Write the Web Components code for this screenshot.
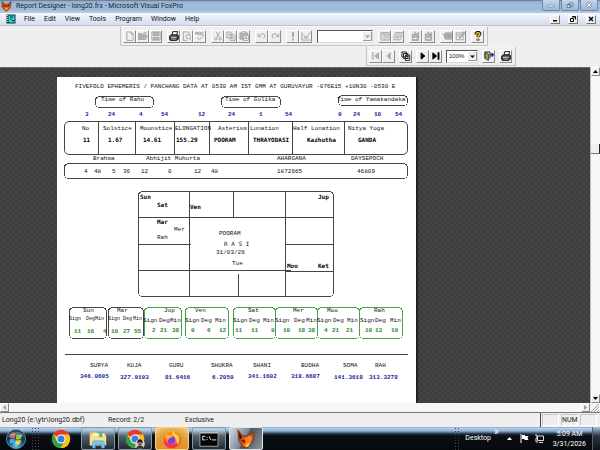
<!DOCTYPE html>
<html lang="en">
<head>
<meta charset="utf-8">
<title>Report Designer - long20.frx - Microsoft Visual FoxPro</title>
<style>
html, body { margin: 0; height: 100%; }
body { font: 7px/9px Roboto, "Open Sans", sans-serif; color: #1c1c1c; overflow: hidden; background: #eee; }
</style>
</head>
<body>
<fox-window></fox-window>

<template id="t-window">
<style>
:host { display: flex; flex-direction: column; min-height: 100vh; height: 100vh; }
.dock { flex: none; height: 42px; background: #efefef; border-top: 1px solid #c3c3c8; box-sizing: border-box; display: flex; flex-direction: column; }
.dock tool-bar.std { margin-left: 120px; --gap: 5px; }
.dock tool-bar.prev { margin-left: 366px; }
report-desk { flex: 1; min-height: 0; }
title-bar, menu-bar, status-bar, task-bar { flex: none; }
</style>
<title-bar>Report Designer - long20.frx - Microsoft Visual FoxPro</title-bar>
<menu-bar></menu-bar>
<div class="dock">
  <tool-bar class="std" label="Standard">
    <tool-group><tool-button icon="new" label="New" off></tool-button><tool-button icon="open" label="Open" off></tool-button><tool-button icon="save" label="Save" off></tool-button></tool-group>
    <tool-group><tool-button icon="print" label="Print"></tool-button><tool-button icon="preview" label="Print Preview" off></tool-button><tool-button icon="spell" label="Spelling" off></tool-button></tool-group>
    <tool-group><tool-button icon="cut" label="Cut" off></tool-button><tool-button icon="copy" label="Copy" off></tool-button><tool-button icon="paste" label="Paste" off></tool-button></tool-group>
    <tool-group><tool-button icon="undo" label="Undo" off></tool-button><tool-button icon="redo" label="Redo" off></tool-button></tool-group>
    <tool-group><tool-button icon="run" label="Run" off></tool-button><tool-button icon="modify" label="Modify Form" off></tool-button></tool-group>
    <combo-box label="Database" off style="--w:56px"></combo-box>
    <tool-group><tool-button icon="command" label="Command Window" off></tool-button><tool-button icon="view" label="Data Session Window" off></tool-button></tool-group>
    <tool-group><tool-button icon="wizard" label="Form Wizard" off></tool-button><tool-button icon="wizard" label="Report Wizard" off></tool-button></tool-group>
    <tool-group><tool-button icon="autoform" label="AutoForm" off></tool-button><tool-button icon="autoreport" label="AutoReport" off></tool-button></tool-group>
    <tool-group><tool-button icon="help" label="Help"></tool-button></tool-group>
  </tool-bar>
  <tool-bar class="prev" label="Print Preview">
    <tool-group><tool-button icon="first" label="First Page" off></tool-button><tool-button icon="back" label="Previous Page" off></tool-button></tool-group>
    <tool-group><tool-button icon="goto" label="Go to Page"></tool-button></tool-group>
    <tool-group><tool-button icon="next" label="Next Page"></tool-button><tool-button icon="last" label="Last Page"></tool-button></tool-group>
    <combo-box label="Zoom" value="100%" style="--w:32px"></combo-box>
    <tool-group><tool-button icon="door" label="Close Preview"></tool-button></tool-group>
    <tool-group><tool-button icon="print" label="Print Report"></tool-button></tool-group>
  </tool-bar>
</div>
<report-desk><report-sheet></report-sheet></report-desk>
<status-bar></status-bar>
<task-bar></task-bar>
</template>

<template id="t-title">
<style>
:host { display: flex; align-items: center; height: 13px; background: linear-gradient(#4d5a6b 0, #8fadcb 1px, #a3bfdc 5px, #9bb9d8 9px, #b8cde4 13px); }
h1 { flex: 1; margin: 0; font: inherit; white-space: nowrap; color: #15202e; }
svg { width: 11px; height: 11px; margin: 0 4px 0 1px; }
.b { display: flex; gap: 1px; padding-right: 2px; align-self: flex-start; }
button { width: 18px; height: 11px; padding: 0; border: 1px solid #6f88a6; border-top: 0; border-radius: 0 0 2px 2px; background: linear-gradient(#c4d6ea, #9db8d5); display: grid; place-items: center; }
button svg { width: 8px; height: 6px; margin: 0; }
</style>
<svg viewBox="0 0 24 24"><path d="M2 1l7 6h6l7-6-1 12-4 5-5 5-6-5-4-5z" fill="#d8470c" stroke="#5a1a04"/><path d="M8 12l4 3 5-4-1 5-4 5-4-4z" fill="#f79a2b"/><path d="M6 10l4 2M18 9l-4 3" stroke="#200" stroke-width="2"/></svg>
<h1><slot></slot></h1>
<div class="b">
<button aria-label="Minimize"><svg viewBox="0 0 8 6"><path d="M1 3h6v2H1z" fill="#eef3f9" stroke="#68788c" stroke-width=".6"/></svg></button>
<button aria-label="Restore"><svg viewBox="0 0 8 6"><path d="M3 1h4v3H3zM1 2.500h4v3H1z" fill="#dfe8f2" stroke="#58687c" stroke-width=".8"/></svg></button>
<button aria-label="Close"><svg viewBox="0 0 8 6"><path d="M1.500 .5l5 5M6.500 .5l-5 5" stroke="#58687c" stroke-width="2.400"/><path d="M1.500 .5l5 5M6.500 .5l-5 5" stroke="#f2f6fa" stroke-width="1.200"/></svg></button>
</div>
</template>

<template id="t-menu">
<style>
:host { display: flex; align-items: center; height: 12px; background: linear-gradient(#f5f8fc, #dfe6f5 60%, #d6def0); }
.doc { width: 10px; height: 10px; margin: 0 8px 0 6px; }
nav { flex: 1; display: flex; gap: 9px; }
nav button { border: 0; padding: 0; background: none; font: inherit; color: #111; }
.m { display: flex; gap: 8px; padding-right: 4px; }
.m button { width: 10px; height: 9px; padding: 0; background: #efefef; border: 1px solid; border-color: #fff #777 #777 #fff; display: grid; place-items: center; }
.m svg { width: 6px; height: 6px; }
</style>
<svg class="doc" viewBox="0 0 20 20"><path d="M1 1h18v18H1z" fill="#0f3338"/><path d="M5 3h12v14H5z" fill="#2fd0cf"/><path d="M1 3h3M1 7h3M1 11h3M1 15h3" stroke="#e8d56a" stroke-width="2"/><path d="M8 6h6M8 10h3M12 13h4" stroke="#124" stroke-width="2"/></svg>
<nav><button>File</button><button>Edit</button><button>View</button><button>Tools</button><button>Program</button><button>Window</button><button>Help</button></nav>
<div class="m">
<button aria-label="Minimize document"><svg viewBox="0 0 6 6"><path d="M1 4h4v1.500H1z"/></svg></button>
<button aria-label="Restore document"><svg viewBox="0 0 6 6"><path d="M2.500 .5h3v3M2 1h3.500M.5 2.500h3v3h-3z" fill="none" stroke="#000"/></svg></button>
<button aria-label="Close document"><svg viewBox="0 0 6 6"><path d="M1 1l4 4M5 1l-4 4" stroke="#000" stroke-width="1.400"/></svg></button>
</div>
</template>

<template id="t-bar">
<style>
:host { display: block; align-self: flex-start; }
div { display: flex; align-items: center; gap: var(--gap, 4px); height: 20px; padding: 0 3px 0 2px; box-sizing: border-box; border: 1px solid; border-color: #f8f8f8 #c4c4c4 #c4c4c4 #c4c4c4; }
</style>
<div role="toolbar"><slot></slot></div>
</template>

<template id="t-group"><style>:host { display: flex; }</style><slot></slot></template>

<template id="t-tool">
<style>
:host { display: block; }
button { display: grid; place-items: center; width: 13px; height: 13px; padding: 0; background: #efefef; border: 1px solid; border-color: #fff #8a8a8a #8a8a8a #fff; }
svg { width: 10px; height: 10px; fill: none; stroke: #222; stroke-width: 1.600; }
button:disabled svg { stroke: #a8a8a8; --f: #b4b4b4; }
</style>
<button><svg viewBox="0 0 16 16"></svg></button>
</template>

<template id="t-combo">
<style>
:host { display: block; position: relative; width: var(--w); }
select { appearance: none; display: block; width: 100%; height: 13px; padding: 0 10px 0 2px; box-sizing: border-box; font: 6px/9px "Liberation Sans", Arial, sans-serif; color: #111; background: #fff; border: 1px solid; border-color: #555 #d8d8d8 #d8d8d8 #555; border-radius: 0; opacity: 1; }
svg { position: absolute; right: 1px; top: 2px; width: 9px; height: 9px; background: #eee; pointer-events: none; }
:host([off]) svg { fill: #999; }
</style>
<select></select><svg viewBox="0 0 9 9"><path d="M2 3.500h5L4.500 6z"/><path d="M8.500 0v8.500H0" fill="none" stroke="#999"/></svg>
</template>

<template id="t-desk">
<style>
:host { display: grid; grid-template-columns: 1fr 10px; grid-template-rows: 1fr 9px; background: #f6f6f6; }
.view { overflow: hidden; padding: 9px 0 0 57px; display: flex; border-top: 1px solid #666; box-sizing: border-box;
  background: repeating-conic-gradient(#3d3d3d 0 25%, #444 0 50%) 0 0 / 6px 6px; }
.v { display: flex; flex-direction: column; justify-content: space-between; background: #f8f8f8; border-left: 1px solid #bbb; }
.h { display: flex; justify-content: space-between; }
button { width: 9px; height: 9px; padding: 0; flex: none; background: #efefef; border: 1px solid; border-color: #fff #8a8a8a #8a8a8a #fff; display: grid; place-items: center; }
svg { width: 5px; height: 5px; display: block; }
.thumb { height: 10px; margin-top: 68px; border-bottom: 1px solid #777; border-right: 1px solid #222; background: #f0f0f0; box-sizing: border-box; }
.sp { flex: 1; }
.grip { width: 9px; height: 9px; }
</style>
<div class="view"><slot></slot></div>
<div class="v"><button aria-label="Scroll up"><svg viewBox="0 0 5 5"><path d="M0 4h5L2.500 1z"/></svg></button><div class="thumb"></div><div class="sp"></div><button aria-label="Scroll down"><svg viewBox="0 0 5 5"><path d="M0 1h5L2.500 4z"/></svg></button></div>
<div class="h"><button aria-label="Scroll left"><svg viewBox="0 0 5 5"><path d="M4 0v5L1 2.500z" fill="#999"/></svg></button><button aria-label="Scroll right"><svg viewBox="0 0 5 5"><path d="M1 0v5l3-2.500z" fill="#999"/></svg></button></div>
<svg class="grip" viewBox="0 0 9 9"><path d="M9 1L1 9M9 4L4 9M9 7L7 9" stroke="#999"/></svg>
</template>

<template id="t-sheet">
<style>
:host { display: block; position: relative; flex: none; width: 359px; background: #fff; box-shadow: 2px 0 #222; font: 6px/8px "Liberation Mono", "Courier New", monospace; color: #111; }
h2 { margin: 6px 0 0 18px; font: inherit; white-space: nowrap; }
.art { position: absolute; left: 0; top: 0; width: 359px; height: 326px; fill: none; stroke: #444; shape-rendering: crispEdges; }
.g { stroke: #4aa34a; }
table { position: absolute; left: 7px; top: 44px; width: 344px; height: 34px; table-layout: fixed; border-collapse: separate; border-spacing: 0; border: 1px solid #444; border-radius: 5px; }
th, td { padding: 0 0 0 var(--i); font-weight: 400; text-align: left; white-space: nowrap; border-right: 1px solid #444; vertical-align: top; }
th { height: 11px; padding-top: 3px; }
td { font-family: "DejaVu Sans Mono", monospace; font-weight: 700; color: #000; padding-top: 0; }
th:last-child, td:last-child { border-right: 0; }
</style>
<svg class="art" viewBox="0 0 359 326"></svg>
<h2>FIVEFOLD EPHEMERIS / PANCHANG DATA AT 0530 AM IST GMM AT GURUVAYUR -076E15 +10N30 -0530 E</h2>
<table>
<colgroup><col style="width:34px"><col style="width:37px"><col style="width:39px"><col style="width:35px"><col style="width:39px"><col style="width:44px"><col style="width:52px"><col></colgroup>
<thead><tr></tr></thead><tbody><tr></tr></tbody>
</table>
</template>

<template id="t-field">
<style>
:host { display: block; position: absolute; white-space: nowrap; }
:host([k=n]) { color: #1a1a9a; font-weight: 700; }
:host([k=g]) { color: #1c8a1c; font-weight: 700; }
:host([k=b]) { color: #000; font-family: "DejaVu Sans Mono", monospace; font-weight: 700; }
:host([k=r]) { font-family: "DejaVu Sans Mono", monospace; }
:host([k=s]) { font-size: 5px; }
</style><slot></slot>
</template>

<template id="t-status">
<style>
:host { display: flex; align-items: center; height: 15px; box-sizing: border-box; background: #efefef; border-top: 1px solid #777; white-space: nowrap; padding-left: 2px; }
.f { width: 106px; } .r { width: 77px; } .e { flex: 1; }
.c { display: flex; gap: 2px; padding: 0 3px 0 1px; border-left: 1px solid #444; height: 14px; align-items: center; }
.c span { width: 17px; height: 12px; line-height: 11px; text-align: center; box-sizing: border-box; border: 1px solid; border-color: #c4c4c4 #fff #fff #c4c4c4; }
</style>
<span class="f">Long20 (e:\ytr\long20.dbf)</span><span class="r">Record: 2/2</span><span class="e">Exclusive</span>
<div class="c"><span></span><span>NUM</span><span></span></div>
</template>

<template id="t-task">
<style>
:host { display: flex; align-items: stretch; height: 23px; box-sizing: border-box; background: linear-gradient(#8c939b 0, #b6d2ef 1px, #8fb2d6 4px, #1f2c3a 7px, #0a0d12 9px, #070a0f 100%); color: #fff; }
button { display: grid; place-items: center; padding: 0; border: 0; background: none; color: inherit; font: inherit; }
.apps { display: flex; gap: 3px; flex: 1; padding-left: 4px; }
.apps button { width: 34px; border: 1px solid transparent; border-radius: 2px; box-sizing: border-box; }
.apps .start { width: 24px; } .apps .dots { width: 10px; }
.apps .o { border-color: #8a97a5; background: linear-gradient(#b3cce6 2px, #52606e 8px, #202a34); }
.apps .ff { border-color: #f3cf8a; background: radial-gradient(circle at 50% 100%, #ee8618, #dd9c35 60%, #f3d483); }
.apps .on { border-color: #dde4ea; background: linear-gradient(120deg, #cddbe8, #7e8994 45%, #4f5760 50%, #8b939b); }
svg { width: 20px; height: 20px; display: block; }
.dots { width: 5px; align-self: stretch; background: radial-gradient(#445 1px, transparent 1px) 0 0 / 3px 3px; }
.tray { display: flex; align-items: center; gap: 6px; }
.tray svg { width: 9px; height: 9px; }
.mini { align-self: flex-start; margin-left: -3px; font-size: 10px; }
.clock { text-align: center; line-height: 10px; padding-left: 3px; }
.show { width: 8px; align-self: stretch; background: linear-gradient(#a9c2da, #29323c 40%, #10151b); border-left: 1px solid #53606c; }
</style>
<div class="apps">
<button class="start" aria-label="Start"><svg viewBox="0 0 22 22"><defs><radialGradient id="o" cx=".5" cy=".85"><stop offset="0" stop-color="#5fd0f5"/><stop offset=".6" stop-color="#1c6298"/><stop offset="1" stop-color="#123757"/></radialGradient></defs><circle cx="11" cy="11" r="10.500" fill="url(#o)" stroke="#7fa9c9" stroke-width=".8"/><path d="M5 6q3-2 5.500-.5L9.800 10.500Q7 9 4.300 10.500z" fill="#f0642a"/><path d="M11.500 6q3 1.500 6-.3l-1 5q-3 1.600-5.700.2z" fill="#8ecb3c"/><path d="M4.200 11.500q3-1.500 5.500 0L9 16.200q-2.600-1.500-5 0z" fill="#4aa8ec"/><path d="M10.700 12q3 1.300 5.700-.2l-1 4.700q-3 1.500-5.500 0z" fill="#fbd13b"/><path d="M2 9a9.500 9 0 0 1 18 0q-9-5-18 0" fill="#fff" opacity=".3"/></svg></button>
<span class="dots"></span>
<button aria-label="Google Chrome"><chrome-logo></chrome-logo></button>
<button class="o" aria-label="File Explorer"><svg viewBox="0 0 22 22"><path d="M2 4l7-1 1 2h9v13H2z" fill="#e8c765"/><path d="M5 5h13v4H5z" fill="#fff"/><path d="M2 7h18v11H2z" fill="#f6e08f"/><path d="M12 3h4v6h-4z" fill="#6fb56a"/><path d="M5 21v-6q0-2 2-2h9q2 0 2 2v6h-3v-4H8v4z" fill="#7cc6ec" stroke="#4a96c4" stroke-width=".6"/></svg></button>
<button class="o" aria-label="Google Chrome, profile"><chrome-logo profile></chrome-logo></button>
<button class="ff" aria-label="Firefox"><svg viewBox="0 0 22 22"><circle cx="11" cy="12" r="9" fill="#ff8a1e"/><path d="M3 8q-3 8 3 12 6 3 11-1 5-4 3-11-1 5-4 7-6 4-11-1-3-3-2-6" fill="#f6334f"/><path d="M12 1q2 5 6 7 3 5-1 10 0-6-4-8-3-4-1-9" fill="#ffd23a"/><circle cx="10.500" cy="12" r="4.300" fill="#7d3de0"/><path d="M4 5q2 2 4 2 3 0 4 2-4 0-5 3-4-2-3-7" fill="#ffb02e"/></svg></button>
<button class="o" aria-label="Command Prompt"><svg viewBox="0 0 22 22"><path d="M1 3h20v16H1z" fill="#050505" stroke="#aaa"/><path d="M1 3h20v2H1z" fill="#bbb"/><path d="M4 8h3M4 8v4h3M9 9v1M9 11v1M11 8l2 4M14 12h5" stroke="#eee" fill="none"/></svg></button>
<button class="on" aria-label="Visual FoxPro"><svg viewBox="0 0 22 22"><path d="M2 1l5 6 6 1 7-5-1 9-3 5-4 4-4-1-5-7z" fill="#d8520f" stroke="#6b2106" stroke-width=".8"/><path d="M10 10l5-3 3 3-2 6-5 4-3-2 3-3z" fill="#f58420"/><path d="M3 3l4 6-3 3zM5 13l4-1 1 3z" fill="#3a1205"/><path d="M11 17l4-2-1 4-3 1z" fill="#fbc36c"/></svg></button>
</div>
<div class="tray">
<span class="dots"></span><span>Desktop</span><span class="mini">»</span>
<button aria-label="Show hidden icons"><svg viewBox="0 0 9 9"><path d="M2 6h5L4.500 3z" fill="#fff"/></svg></button>
<button aria-label="Action Center"><svg viewBox="0 0 9 9"><path d="M1 0v9" stroke="#fff"/><path d="M2 1h3v1h3.500L7.500 4l1 2H4.500V5H2z" fill="#fff"/></svg></button>
<button aria-label="Network"><svg viewBox="0 0 9 9"><path d="M2.500 2h6v4.500h-6zM4 8.500h4M0 1h2v3H1v4h2" fill="none" stroke="#ddd"/></svg></button>
<time class="clock">5:09 AM<br>3/31/2026</time>
<button class="show" aria-label="Show desktop"></button>
</div>
</template>

<template id="t-chrome">
<style>:host { display: block; } svg { width: 20px; height: 20px; display: block; }</style>
<svg viewBox="0 0 22 22"><circle cx="11" cy="11" r="10" fill="#fbc116"/><path d="M11 11L2.300 6A10 10 0 0 1 19.700 6z" fill="#e33b2e"/><path d="M2.300 6A10 10 0 0 0 10.500 21L15.300 13.500 11 11 6.700 13.500z" fill="#2ba24c"/><path d="M11 6h8.700A10 10 0 0 1 10.500 21L15.300 13.500z" fill="#fbc116"/><circle cx="11" cy="11" r="5" fill="#fff"/><circle cx="11" cy="11" r="3.900" fill="#3b7de8"/><g class="p"><circle cx="16.500" cy="16.500" r="5.300" fill="#cfd4d6"/><path d="M12.500 20q4-4 8 0-4 3.500-8 0" fill="#333"/><circle cx="16.500" cy="15.500" r="2.600" fill="#a9714f"/><path d="M13.700 15q0-3.500 2.800-3.500t2.800 3.500q-3-2-5.600 0M15 17h3" fill="#221a18" stroke="#221a18" stroke-width=".5"/></g></svg>
</template>

<script>
const make = (name, tpl, setup) => customElements.define(name, class extends HTMLElement {
  constructor() {
    super();
    this.attachShadow({ mode: "open" }).append(document.getElementById(tpl).content.cloneNode(true));
  }
  connectedCallback() {
    if (setup && !this.ready) { this.ready = true; setup(this, this.shadowRoot); }
  }
});

const F = "var(--f,#222)";
const ICONS = {
  new: '<path d="M3 1.500h7l3 3V15H3zM10 1.500V5h3"/>',
  open: `<path d="M1 13V4h4l1 1h6v3" fill="${F}"/><path d="M1 13.500l3-6h11l-3 6z" fill="${F}"/><path d="M9 3q3-2 5 1"/>`,
  save: `<path d="M1.500 1.500h13v13h-13z"/><path d="M4 2h8v5H4zM4 10h8v4H4z" fill="${F}"/>`,
  print: `<path d="M5 6l1-5h8l-2 5" fill="#fff"/><path d="M1 8l3-2h10l1 2v5l-3 2H2l-1-2z" fill="#444"/><path d="M3 10h9" stroke="#ddd"/><path d="M4 13h7" stroke="#aaa"/>`,
  preview: '<path d="M2 1.500h8l2 2V6M2 1.500V15h6"/><circle cx="10" cy="9" r="3.500"/><path d="M12 12l3 3"/>',
  spell: '<path d="M1 6V2h3v4M1 4h3M6 2v4h3V2zM14 2h-3v4h3M4 10l3 4 7-7"/>',
  cut: '<path d="M5 1l5 9M11 1L6 10"/><circle cx="4.500" cy="12.500" r="2"/><circle cx="11.500" cy="12.500" r="2"/>',
  copy: '<path d="M1.500 1.500h6l2 2V11h-8zM6.500 5.500h6l2 2V15h-8zM3 5h4M8 9h4M8 12h4" fill="#eee"/>',
  paste: `<path d="M1.500 3h12v10h-12z" fill="${F}"/><path d="M5 1h5v3H5z" fill="#eee"/><path d="M7 7h8v8H7zM9 10h4M9 12h4" fill="#eee"/>`,
  undo: '<path d="M2 4v5h5M3 8q5-6 9-2 2 4-2 6"/>',
  redo: '<path d="M14 4v5H9M13 8Q8 2 4 6q-2 4 2 6"/>',
  run: '<path d="M8 1v9M8 12v3" stroke-width="3"/>',
  modify: '<path d="M1.500 2v12.500H15M4 6l4 5 7-9M5 11h7"/>',
  command: '<path d="M1.500 2.500h13v12h-13zM1 5h14M8 5v9M4 8h2M10 8h3M4 11h2M10 11h3"/>',
  view: '<path d="M4 2.500h11l-3 6H3zM1.500 8v6h10l3-6M4 11h6M6 5h6"/>',
  wizard: `<path d="M2 5h10v10H2z" fill="${F}"/><path d="M5 1l8 9M13 2l-4 4" stroke-width="2"/><path d="M4 12h5" stroke="#eee"/>`,
  autoform: `<path d="M5 3h10v10H5z" fill="${F}"/><path d="M1 5l5 2-3 2 4 3M8 6h5M8 9h5" stroke="#999"/>`,
  autoreport: `<path d="M2 3h11v11H2z"/><path d="M4 6h5M4 9h3M14 1l-6 8-1 3 3-2 6-7z" fill="${F}"/>`,
  help: '<path d="M5 6V3.500q3-3 6 0 1 2-3 5V10M8 12.500V15" stroke="#111" stroke-width="4.500"/><path d="M5 5.500V3.800q3-2.500 5.800 0 .8 2-2.800 4.500V10M8 12.800v1.700" stroke="#f3e320" stroke-width="2"/>',
  first: `<path d="M3 2v12" stroke-width="2"/><path d="M12 3v10L6 8z" fill="${F}"/>`,
  back: `<path d="M10 3v10L5 8z" fill="${F}"/>`,
  goto: '<path d="M1.500 1.500h7v8h-7zM4 4h7v8H4zM7 6.500h7V15H7z" fill="#fff"/><path d="M9 9h3M9 12h3"/>',
  next: '<path d="M5 3v10l6-5z" fill="#000" stroke="#000"/>',
  last: '<path d="M3 3v10l6-5z" fill="#000" stroke="#000"/><path d="M12 2v12" stroke="#000" stroke-width="3"/>',
  door: '<path d="M1.500 12V1.500h8V12" fill="#eee"/><path d="M2 2l5 3v10l-5-3z" fill="#b5a92a" stroke="#443"/><path d="M10 6h6M13 3v6" stroke="#22a" stroke-width="2.500"/>'
};

make("fox-window", "t-window");
make("title-bar", "t-title");
make("menu-bar", "t-menu");
make("tool-bar", "t-bar", (el, root) => root.querySelector("div").setAttribute("aria-label", el.getAttribute("label")));
make("tool-group", "t-group");
make("tool-button", "t-tool", (el, root) => {
  const b = root.querySelector("button");
  b.setAttribute("aria-label", el.getAttribute("label"));
  b.disabled = el.hasAttribute("off");
  root.querySelector("svg").innerHTML = ICONS[el.getAttribute("icon")];
});
make("combo-box", "t-combo", (el, root) => {
  const s = root.querySelector("select");
  s.setAttribute("aria-label", el.getAttribute("label"));
  s.disabled = el.hasAttribute("off");
  s.add(new Option(el.getAttribute("value") || ""));
});
make("report-desk", "t-desk");
make("report-field", "t-field");
make("status-bar", "t-status");
make("chrome-logo", "t-chrome", (el, root) => { if (!el.hasAttribute("profile")) root.querySelector(".p").remove(); });
make("task-bar", "t-task");

// Column heading, its indent, value, its indent.
const COLUMNS = [
  ["No", 17, "11", 18], ["Solstice", 4, "1.67", 9], ["Moonstice", 4, "14.61", 7], ["ELONGATION", 0, "155.29", 1],
  ["Asterism", 8, "POORAM", 4], ["Lunation", 1, "THRAYODASI", 4], ["Half Lunation", 0, "Kazhutha", 14], ["Nitya Yoga", 3, "GANDA", 13]
];

// Report fields: kind, vertical centre, then pairs of left edge and text.
const FIELDS = [
  ["", 23, 44, "Time of Rahu", 168, "Time of Gulika", 280, "Time of Yamakandaka"],
  ["n", 38, 28, "3", 51, "24", 82, "4", 104, "54", 141, "12", 171, "24", 202, "1", 228, "54", 281, "9", 296, "24", 317, "10", 338, "54"],
  ["", 82, 36, "Brahma", 89, "Abhijit Muhurta", 220, "AHARGANA", 294, "DAYSEPOCH"],
  ["", 95, 27, "4", 37, "48", 55, "5", 66, "36", 84, "12", 111, "0", 137, "12", 154, "48", 220, "1872665", 300, "46809"],
  ["b", 120, 83, "Sun", 261, "Jup"],
  ["b", 128, 100, "Sat"], ["b", 130, 133, "Ven"], ["b", 145, 100, "Mar"],
  ["", 153, 117, "Mer"], ["", 161, 100, "Rah"],
  ["", 157, 162, "POORAM"], ["r", 167, 167, "R A S I"], ["", 176, 159, "31/03/26"], ["", 187, 175, "Tue"],
  ["b", 189, 230, "Moo", 261, "Ket"],
  ["", 234, 26, "Sun", 60, "Mar", 107, "Jup", 138, "Ven", 191, "Sat", 236, "Mer", 270, "Moo", 317, "Rah"],
  ["s", 242, 12, "Sign", 29, "Deg", 38, "Min", 51, "Sign", 66, "Deg", 76, "Min"],
  ["", 244, 86, "Sign", 102, "Deg", 113, "Min", 128, "Sign", 144, "Deg", 158, "Min", 176, "Sign", 192, "Deg", 206, "Min",
    218, "Sign", 237, "Deg", 249, "Min", 260, "Sign", 276, "Deg", 290, "Min", 303, "Sign", 318, "Deg", 333, "Min"],
  ["g", 255, 17, "11", 30, "16", 46, "4", 54, "10", 66, "27", 77, "55"],
  ["g", 254, 95, "2", 103, "21", 115, "38", 134, "0", 150, "6", 162, "12", 178, "11", 194, "11", 214, "9",
    226, "10", 241, "18", 251, "38", 267, "4", 275, "21", 289, "21", 308, "10", 318, "13", 334, "19"],
  ["", 289, 33, "SURYA", 70, "KUJA", 112, "GURU", 154, "SHUKRA", 196, "SHANI", 244, "BUDHA", 286, "SOMA", 318, "RAH"],
  ["n", 300, 23, "346.0695", 191, "341.1602", 234, "318.6687"],
  ["n", 301, 63, "327.9193", 108, "81.6416", 155, "6.2059", 277, "141.3618", 312, "313.3278"]
];

// Rounded frames: x, y, width, height, radius, class.
const FRAMES = [
  [38, 19, 58, 11, 4], [164, 19, 59, 11, 4], [281, 18, 69, 10, 4], [7, 86, 343, 15, 4], [81, 114, 195, 105, 4],
  [12, 230, 37, 31, 4], [51, 230, 35, 31, 4], [87, 230, 37, 31, 4, "g"], [128, 230, 43, 31, 4, "g"],
  [176, 230, 42, 31, 4, "g"], [218, 230, 42, 31, 4, "g"], [260, 230, 42, 31, 4, "g"], [302, 230, 43, 31, 4, "g"]
];

make("report-sheet", "t-sheet", (el, root) => {
  root.querySelector(".art").innerHTML =
    `<g transform="translate(.5 .5)">` +
    FRAMES.map(([x, y, w, h, r, c = ""]) => `<rect x="${x}" y="${y}" width="${w}" height="${h}" rx="${r}" class="${c}"/>`).join("") +
    `<path d="M132 114v105M176 114v26M228 114v105M81 140h195M81 167h52M228 167h48M81 193h152M228 194h48M181 196v22M7 277h343"/></g>`;
  const cell = (tag, text, indent) => {
    const c = document.createElement(tag);
    c.textContent = text;
    c.style.setProperty("--i", indent + "px");
    return c;
  };
  const [head, body] = root.querySelectorAll("tr");
  for (const [h, hi, v, vi] of COLUMNS) { head.append(cell("th", h, hi)); body.append(cell("td", v, vi)); }
  for (const [kind, mid, ...items] of FIELDS)
    for (let i = 0; i < items.length; i += 2) {
      const f = document.createElement("report-field");
      f.setAttribute("k", kind);
      f.style.left = items[i] + "px";
      f.style.top = mid - 4 + "px";
      f.textContent = items[i + 1];
      root.append(f);
    }
});
</script>
</body>
</html>
